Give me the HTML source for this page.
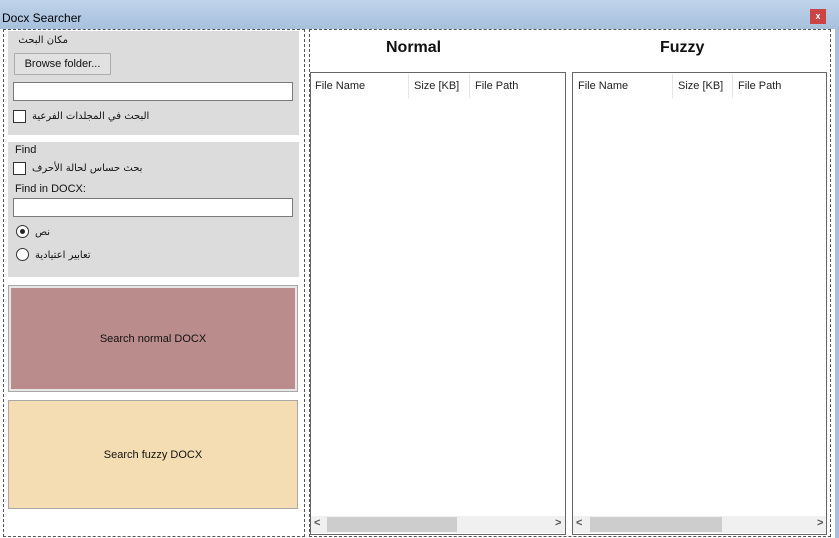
<!DOCTYPE html>
<html><head><meta charset="utf-8"><style>
*{margin:0;padding:0;box-sizing:border-box}
body{width:839px;height:538px;position:relative;background:#fff;font-family:"Liberation Sans","DejaVu Sans",sans-serif;font-size:11px;color:#111;overflow:hidden}
.a{position:absolute}
.t{white-space:nowrap}
.dash{border:1px dashed #555}
.grp{background:#dcdcdc}
.box{background:#fff;border:1px solid #7a7a7a}
.cb{width:13px;height:13px;border:1px solid #333;background:#fff}
.rb{width:13px;height:13px;border:1px solid #333;border-radius:50%;background:#fff}
.ar{font-family:"DejaVu Sans",sans-serif;font-size:10px;direction:rtl}
.list{border:1px solid #666;background:#fff}
.hd{color:#222;font-size:11px}
.sb{background:#f0f0f0}
</style></head><body>
<div class="a" style="left:0;top:0;width:839px;height:29px;background:linear-gradient(#c0d4ea,#a6c0dd)"></div>
<div class="a t" style="left:2px;top:11px;font-size:12px;color:#000">Docx Searcher</div>
<div class="a" style="left:810px;top:9px;width:16px;height:15px;background:#c44;color:#fff;font-size:9px;font-weight:bold;text-align:center;line-height:14px">x</div>
<div class="a" style="left:835px;top:29px;width:4px;height:509px;background:#a6c0dd"></div>

<div class="a dash" style="left:3px;top:29px;width:302px;height:508px"></div>
<div class="a grp" style="left:8px;top:31px;width:291px;height:104px"></div>
<div class="a t ar" style="left:30px;top:35px;width:38px">مكان البحث</div>
<div class="a" style="left:14px;top:53px;width:97px;height:22px;background:#e1e1e1;border:1px solid #adadad;text-align:center;line-height:20px">Browse folder...</div>
<div class="a box" style="left:13px;top:82px;width:280px;height:19px"></div>
<div class="a cb" style="left:13px;top:110px"></div>
<div class="a t ar" style="left:32px;top:111px;width:130px;text-align:left;direction:rtl">البحث في المجلدات الفرعية</div>

<div class="a grp" style="left:8px;top:142px;width:291px;height:135px"></div>
<div class="a t" style="left:15px;top:144px">Find</div>
<div class="a cb" style="left:13px;top:162px"></div>
<div class="a t ar" style="left:32px;top:163px;width:120px;text-align:left">بحث حساس لحالة الأحرف</div>
<div class="a t" style="left:15px;top:183px">Find in DOCX:</div>
<div class="a box" style="left:13px;top:198px;width:280px;height:19px"></div>
<div class="a rb" style="left:16px;top:225px"><div class="a" style="left:3px;top:3px;width:5px;height:5px;border-radius:50%;background:#222"></div></div>
<div class="a t ar" style="left:35px;top:227px;width:20px;text-align:left">نص</div>
<div class="a rb" style="left:16px;top:248px"></div>
<div class="a t ar" style="left:35px;top:250px;width:65px;text-align:left">تعابير اعتيادية</div>

<div class="a" style="left:8px;top:285px;width:290px;height:107px;border:1px solid #a8a8a8;background:#e6e6e6;padding:2px"><div style="width:100%;height:100%;background:#bb8c8c;display:flex;align-items:center;justify-content:center">Search normal DOCX</div></div>
<div class="a" style="left:8px;top:400px;width:290px;height:109px;border:1px solid #a8a8a8;background:#f5ddb3;display:flex;align-items:center;justify-content:center">Search fuzzy DOCX</div>

<div class="a dash" style="left:309px;top:29px;width:522px;height:508px"></div>
<div class="a t" style="left:386px;top:39px;font-size:16px;font-weight:bold">Normal</div>
<div class="a t" style="left:660px;top:39px;font-size:16px;font-weight:bold">Fuzzy</div>

<div class="a list" style="left:310px;top:72px;width:256px;height:463px"></div>
<div class="a t hd" style="left:315px;top:80px">File Name</div>
<div class="a" style="left:408px;top:74px;width:1px;height:24px;background:#e5e5e5"></div>
<div class="a t hd" style="left:414px;top:80px">Size [KB]</div>
<div class="a" style="left:469px;top:74px;width:1px;height:24px;background:#e5e5e5"></div>
<div class="a t hd" style="left:475px;top:80px">File Path</div>
<div class="a sb" style="left:311px;top:516px;width:254px;height:17px"></div>
<div class="a" style="left:327px;top:517px;width:130px;height:15px;background:#cdcdcd"></div>
<div class="a t" style="left:314px;top:517px;font-size:11px;font-weight:bold;color:#555">&lt;</div>
<div class="a t" style="left:555px;top:517px;font-size:11px;font-weight:bold;color:#555">&gt;</div>

<div class="a list" style="left:572px;top:72px;width:255px;height:463px"></div>
<div class="a t hd" style="left:578px;top:80px">File Name</div>
<div class="a" style="left:672px;top:74px;width:1px;height:24px;background:#e5e5e5"></div>
<div class="a t hd" style="left:678px;top:80px">Size [KB]</div>
<div class="a" style="left:732px;top:74px;width:1px;height:24px;background:#e5e5e5"></div>
<div class="a t hd" style="left:738px;top:80px">File Path</div>
<div class="a sb" style="left:573px;top:516px;width:253px;height:17px"></div>
<div class="a" style="left:590px;top:517px;width:132px;height:15px;background:#cdcdcd"></div>
<div class="a t" style="left:576px;top:517px;font-size:11px;font-weight:bold;color:#555">&lt;</div>
<div class="a t" style="left:817px;top:517px;font-size:11px;font-weight:bold;color:#555">&gt;</div>
</body></html>
